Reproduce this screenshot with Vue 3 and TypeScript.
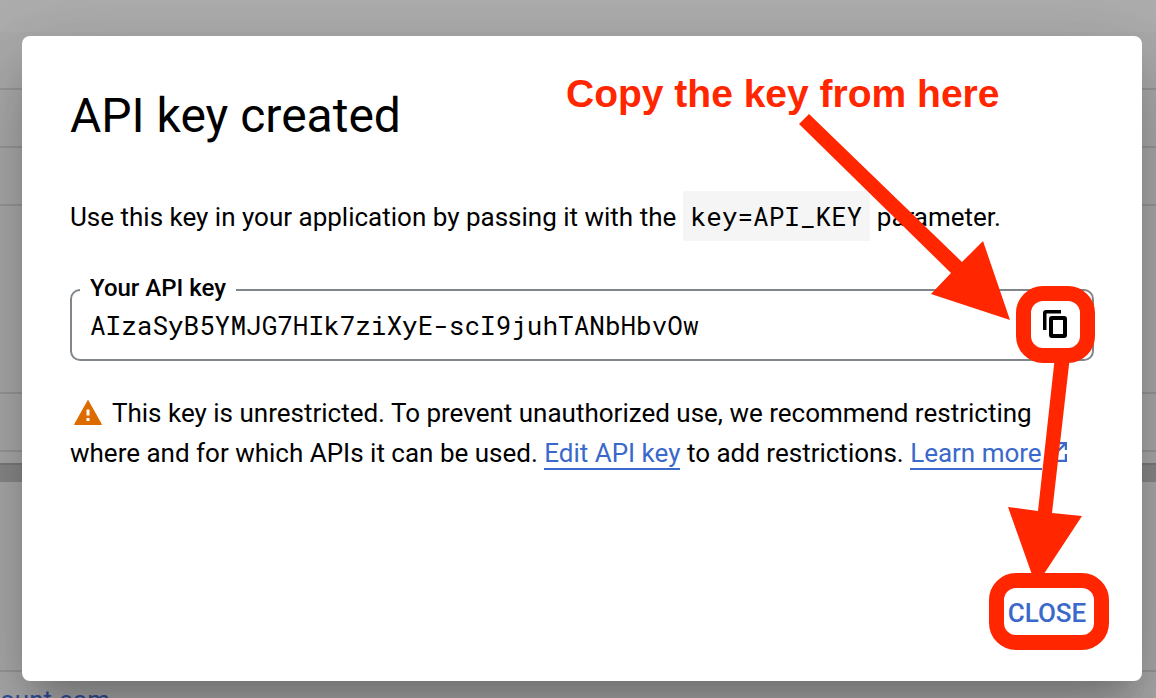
<script setup lang="ts">
import { ref } from 'vue'

const open = ref(true)
const apiKey = ref('AIzaSyB5YMJG7HIk7ziXyE-scI9juhTANbHbvOw')

function copyKey(): void {
  navigator.clipboard?.writeText(apiKey.value)
}

function closeDialog(): void {
  open.value = false
}
</script>

<template>
  <div class="page">
    <div class="backdrop" aria-hidden="true">
      <div class="row toolbar"></div>
      <div class="row first"></div>
      <div class="row"></div>
      <div class="row"></div>
      <div class="row tall"></div>
      <div class="row"></div>
      <div class="row gap"></div>
      <div class="row band"></div>
      <div class="row taller"></div>
      <div class="account">ount.com</div>
    </div>

    <section v-if="open" class="dialog" role="dialog" aria-labelledby="dialog-title">
      <h1 id="dialog-title">API key created</h1>
      <p class="intro">
        Use this key in your application by passing it with the <code>key=API_KEY</code> parameter.
      </p>

      <fieldset class="field">
        <legend><label for="api-key">Your API key</label></legend>
        <div class="field-row">
          <input id="api-key" v-model="apiKey" type="text" readonly spellcheck="false" />
          <button class="copy" type="button" aria-label="Copy API key" @click="copyKey">
            <svg width="24" height="28" viewBox="0 0 24 28" fill="none" stroke="#000">
              <path d="M1.75 20V3Q1.75 1.75 3 1.75H18" stroke-width="3.5" />
              <rect x="8" y="8" width="14" height="18" rx="1" stroke-width="4" />
            </svg>
          </button>
        </div>
      </fieldset>

      <p class="notice">
        <svg class="warning" width="28" height="25" viewBox="0 0 28 25">
          <path d="M14 0.5 27.5 24.5H.5Z" fill="#dd6b00" stroke="#dd6b00" stroke-linejoin="round" />
          <path d="M12.5 9.5h3v6h-3zM12.5 18h3v3h-3z" fill="#fff" />
        </svg>
        This key is unrestricted. To prevent unauthorized use, we recommend restricting where and
        for which APIs it can be used. <a href="#edit">Edit API key</a> to add restrictions.
        <a href="#learn">Learn more</a>
        <svg class="external" width="20" height="20" viewBox="0 0 20 20" fill="none" stroke="#3a68cb" stroke-width="2.2">
          <path d="M8 1.1H1.1v17.8h17.8V12M12 1.1h6.9V8M18.9 1.1 6 14" />
        </svg>
      </p>

      <div class="actions">
        <button class="close" type="button" @click="closeDialog">CLOSE</button>
      </div>

      <div class="annotations">
        <strong>Copy the key from here</strong>
        <svg width="300" height="480" viewBox="798 112 300 480" fill="#ff2600" aria-hidden="true">
          <path d="M809 114 962 262 983 241 1010 320 931 294 951 273 799 124Z" />
          <path d="M1055 356 1070 356 1052 513 1082 516 1036 586 1008 507 1038 511Z" />
        </svg>
      </div>
    </section>
  </div>
</template>

<style>
body {
  margin: 0;
}
</style>

<style scoped>
* {
  box-sizing: border-box;
}

.page {
  position: relative;
  display: flex;
  min-height: 100vh;
  padding: 36px 14px 17px 22px;
  overflow: hidden;
  color: #000;
  font-family: Roboto, "Liberation Sans", sans-serif;
  font-size: 26px;
}

.backdrop {
  position: absolute;
  inset: 0;
  overflow: hidden;
  background: #ababab;
}

.row {
  height: 58px;
  border-bottom: 2px solid #989898;
}

.row.toolbar {
  height: 32px;
  border: 0;
  background: #aeaeae;
}

.row.tall {
  height: 188px;
}

.row.gap {
  height: 13px;
  border-color: #7c7c7c;
}

.row.band {
  height: 17px;
  border: 0;
  background: #8a8a8a;
}

.row.taller {
  height: 190px;
}

.account {
  padding-top: 12px;
  color: #2f4f9d;
  line-height: 32px;
}

.dialog {
  position: relative;
  display: flex;
  flex: 1;
  flex-direction: column;
  min-width: 0;
  padding: 48px 48px 46px;
  border-radius: 8px;
  background: #fff;
  box-shadow:
    0 22px 30px -14px rgba(0, 0, 0, 0.2),
    0 48px 76px 6px rgba(0, 0, 0, 0.13),
    0 18px 92px 16px rgba(0, 0, 0, 0.1);
}

h1 {
  margin: 0;
  font-size: 48px;
  font-weight: 400;
  line-height: 64px;
}

p {
  margin: 0;
}

.intro {
  margin-top: 43px;
  line-height: 50px;
}

code,
input {
  font-family: "Roboto Mono", "DejaVu Sans Mono", monospace;
  font-size: 26px;
}

code {
  display: inline-block;
  padding: 0 8px;
  background: #f5f5f5;
}

.field {
  min-width: 0;
  margin: 34px 0 0;
  padding: 0 12px 0 8px;
  border: 2px solid #80868b;
  border-radius: 10px;
}

legend {
  padding: 0 10px 4px;
  font-size: 24px;
  font-weight: 500;
  line-height: 24px;
}

.field-row {
  display: flex;
  align-items: center;
  height: 55px;
  padding-bottom: 14px;
}

input {
  flex: 1;
  min-width: 0;
  padding: 0 10px;
  border: 0;
  outline: 0;
  background: none;
  color: #000;
}

button {
  flex: none;
  display: flex;
  align-items: center;
  justify-content: center;
  height: 47px;
  padding: 0;
  border: 0;
  border-radius: 12px;
  outline: 15px solid #ff2600;
  background: #fff;
  cursor: pointer;
}

.copy {
  width: 49px;
  padding: 0 1px 1px 0;
}

.notice {
  margin-top: 32px;
  line-height: 40px;
}

.warning {
  margin: 0 4px;
  vertical-align: -3px;
}

.external {
  margin-left: 5px;
  vertical-align: 0;
}

a {
  border-bottom: 2px solid #3a68cb;
  color: #3a68cb;
  text-decoration: none;
}

.actions {
  display: flex;
  justify-content: flex-end;
  margin-top: auto;
}

.close {
  width: 90px;
  padding: 3px 4px 0 0;
  color: #3a68cb;
  font: 500 26px Roboto, sans-serif;
}

.annotations {
  position: absolute;
  top: 36px;
  right: 44px;
  width: 532px;
  pointer-events: none;
}

.annotations strong {
  display: block;
  color: #ff2600;
  font: bold 39px/44px "Liberation Sans", Arial, sans-serif;
}

.annotations svg {
  position: absolute;
  top: 40px;
  right: 0;
}
</style>
